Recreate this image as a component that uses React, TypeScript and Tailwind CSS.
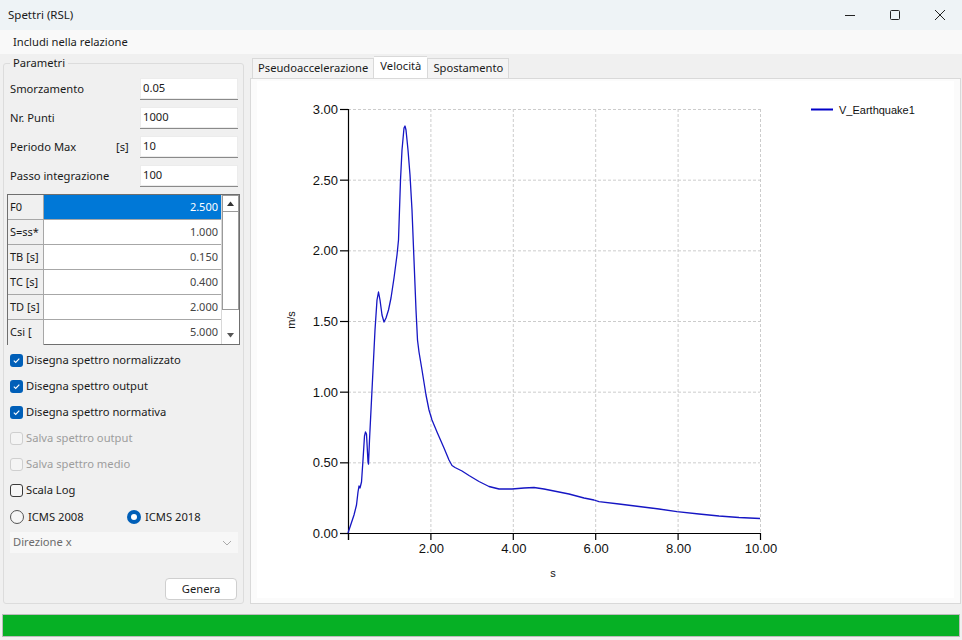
import type { ReactNode } from 'react'

const ui = { fontFamily: '"Segoe UI", "Noto Sans", sans-serif' }
const chartFont = '"Liberation Sans", Arial, sans-serif'

const params = [
  { label: 'Smorzamento', unit: '', value: '0.05' },
  { label: 'Nr. Punti', unit: '', value: '1000' },
  { label: 'Periodo Max', unit: '[s]', value: '10' },
  { label: 'Passo integrazione', unit: '', value: '100' },
]

const rows = [
  { k: 'F0', v: '2.500' },
  { k: 'S=ss*', v: '1.000' },
  { k: 'TB [s]', v: '0.150' },
  { k: 'TC [s]', v: '0.400' },
  { k: 'TD [s]', v: '2.000' },
  { k: 'Csi [', v: '5.000' },
]

const checks = [
  { label: 'Disegna spettro normalizzato', state: 'on' },
  { label: 'Disegna spettro output', state: 'on' },
  { label: 'Disegna spettro normativa', state: 'on' },
  { label: 'Salva spettro output', state: 'disabled' },
  { label: 'Salva spettro medio', state: 'disabled' },
  { label: 'Scala Log', state: 'off' },
]

// chart geometry in page pixels
const X0 = 349
const X1 = 761
const Y0 = 533
const Y1 = 109
const xs = [0, 2, 4, 6, 8, 10].map((v) => ({ v, px: X0 + ((X1 - X0) * v) / 10 }))
const ys = [0, 0.5, 1, 1.5, 2, 2.5, 3].map((v) => ({ v, px: Y0 - ((Y0 - Y1) * v) / 3 }))

const curve: [number, number][] = [
  [349, 533], [352, 524], [355, 515], [357.5, 505], [359, 492], [360, 486], [361, 488],
  [362.5, 482], [364, 460], [365.5, 436], [366.5, 432], [367.5, 434], [369, 462], [369.5, 464],
  [370.5, 440], [372, 410], [374, 370], [376, 330], [378, 300], [379.5, 292], [381, 300],
  [383, 315], [385, 322], [387, 318], [389.5, 310], [392, 298], [395, 278], [398, 255],
  [399.5, 240], [400.5, 210], [401.5, 180], [403, 150], [405, 128], [406, 126], [407, 130],
  [409, 150], [411, 175], [413, 210], [415, 260], [417, 310], [418.5, 340], [420, 352],
  [423, 370], [427, 395], [430, 410], [433, 420], [438, 432], [445, 448], [450, 460],
  [453, 465.5], [456, 467.5], [463, 471], [470, 475.5], [480, 481.5], [490, 486.5], [500, 489],
  [513, 489], [525, 488], [535, 487.5], [545, 489], [555, 491], [570, 494], [585, 498],
  [595, 500], [600, 501.7], [620, 504], [640, 506.5], [660, 509], [678, 511.7], [700, 514],
  [720, 516], [740, 517.5], [761, 518.5],
]

function Check({ state }: { state: string }) {
  if (state === 'on')
    return (
      <span className="flex h-[13px] w-[13px] items-center justify-center rounded-[3px] bg-[#005fb8]">
        <svg width="9" height="9" viewBox="0 0 9 9">
          <path d="M1.8 4.6 L3.7 6.4 L7.3 2.6" fill="none" stroke="white" strokeWidth="1.1" />
        </svg>
      </span>
    )
  return (
    <span
      className={
        state === 'disabled'
          ? 'h-[13px] w-[13px] rounded-[3px] border border-[#cfcfcf] bg-[#f4f4f4]'
          : 'h-[13px] w-[13px] rounded-[3px] border border-[#3a3a3a] bg-[#f6f6f6]'
      }
    />
  )
}

function Radio({ on, children }: { on?: boolean; children: ReactNode }) {
  return (
    <div className="flex items-center gap-[4px]">
      {on ? (
        <span className="flex h-[14px] w-[14px] items-center justify-center rounded-full bg-[#005fb8]">
          <span className="h-[6px] w-[6px] rounded-full bg-white" />
        </span>
      ) : (
        <span className="h-[14px] w-[14px] rounded-full border border-[#555] bg-[#f6f6f6]" />
      )}
      <span>{children}</span>
    </div>
  )
}

function Chart() {
  const d = curve.map(([x, y], i) => `${i ? 'L' : 'M'}${x} ${y}`).join(' ')
  return (
    <svg width="697" height="517" viewBox="258 81 697 517" className="block">
      <g stroke="#cccccc" strokeDasharray="3 2" strokeWidth="1">
        {ys.slice(1).map((t) => (
          <line key={t.v} x1={X0} x2={X1} y1={t.px + 0.5} y2={t.px + 0.5} />
        ))}
        {xs.slice(1).map((t) => (
          <line key={t.v} x1={t.px + 0.5} x2={t.px + 0.5} y1={Y1} y2={Y0} />
        ))}
      </g>
      <g stroke="#000" strokeWidth="1.2">
        <line x1={X0 + 0.5} x2={X0 + 0.5} y1={Y1} y2={Y0 + 7} />
        <line x1={X0} x2={X1 + 0.5} y1={Y0 + 0.5} y2={Y0 + 0.5} />
        {ys.map((t) => (
          <line key={t.v} x1={X0 - 8} x2={X0} y1={t.px + 0.5} y2={t.px + 0.5} />
        ))}
        {xs.map((t) => (
          <line key={t.v} x1={t.px + 0.5} x2={t.px + 0.5} y1={Y0} y2={Y0 + 7} />
        ))}
      </g>
      <g fontFamily={chartFont} fontSize="13" fill="#111">
        {ys.map((t) => (
          <text key={t.v} x={X0 - 10} y={t.px + 5} textAnchor="end">
            {t.v.toFixed(2)}
          </text>
        ))}
        {xs.slice(1).map((t) => (
          <text key={t.v} x={t.px + 1} y={Y0 + 20} textAnchor="middle">
            {t.v.toFixed(2)}
          </text>
        ))}
        <text x="554" y="577" textAnchor="middle" fontSize="11">
          s
        </text>
        <text x="0" y="0" fontSize="11" textAnchor="middle" transform="translate(296 320) rotate(-90)">
          m/s
        </text>
        <text x="840" y="113.5" fontSize="11">
          V_Earthquake1
        </text>
      </g>
      <line x1="812" x2="834" y1="109.5" y2="109.5" stroke="#0000c8" strokeWidth="2" />
      <path d={d} fill="none" stroke="#1616c4" strokeWidth="1.3" strokeLinejoin="round" />
    </svg>
  )
}

export default function App() {
  return (
    <div className="flex h-[640px] w-[962px] flex-col overflow-hidden bg-[#f0f0f0] text-[11.2px] text-[#1a1a1a]" style={ui}>
      {/* title bar */}
      <div className="flex h-[30px] shrink-0 items-center bg-[#eef3f6] pl-[8px]">
        <span className="flex-1 text-[11.5px]">Spettri (RSL)</span>
        <div className="flex h-full">
          <div className="flex w-[45px] items-center justify-center">
            <svg width="12" height="12" viewBox="0 0 12 12">
              <line x1="1" x2="11" y1="6.5" y2="6.5" stroke="#222" strokeWidth="1" />
            </svg>
          </div>
          <div className="flex w-[45px] items-center justify-center">
            <svg width="12" height="12" viewBox="0 0 12 12">
              <rect x="1.5" y="1.5" width="9" height="9" rx="1" fill="none" stroke="#222" strokeWidth="1" />
            </svg>
          </div>
          <div className="flex w-[45px] items-center justify-center">
            <svg width="12" height="12" viewBox="0 0 12 12">
              <path d="M1 1 L11 11 M11 1 L1 11" stroke="#222" strokeWidth="1" />
            </svg>
          </div>
        </div>
      </div>

      {/* menu */}
      <div className="flex h-[24px] shrink-0 items-center bg-[#f9f9f9] pl-[13px]">Includi nella relazione</div>

      <div className="flex min-h-0 flex-1 gap-[6px] pr-[4px] pl-[3px]">
        {/* left group */}
        <fieldset className="mt-[1px] mb-[3px] w-[243px] rounded-[3px] border border-[#dcdcdc] px-[3px] pb-[3px]">
          <legend className="ml-[3px] px-[3px] leading-[16px]">Parametri</legend>
          <div className="mt-[7px] grid gap-[7px]">
            {params.map((p) => (
              <div key={p.label} className="flex h-[22px] items-center pl-[3px] whitespace-nowrap">
                <span className="w-[106px]">{p.label}</span>
                <span className="w-[24px]">{p.unit}</span>
                <div className="flex h-[22px] w-[98px] items-center border-b border-[#8a8a8a] bg-white pl-[3px] shadow-[inset_0_0_0_1px_#ececec]">
                  {p.value}
                </div>
              </div>
            ))}
          </div>

          <div className="mt-[7px] flex h-[151px] w-[233px] border border-[#6f6f6f] bg-white text-[11px]">
            <div className="flex-1">
              {rows.map((r, i) => (
                <div key={r.k} className="flex h-[25px] border-b border-[#a7a7a7] last:border-b-0">
                  <div className="flex w-[36px] items-center border-r border-[#a7a7a7] bg-[#f0f0f0] pl-[2px]">{r.k}</div>
                  <div
                    className={
                      i === 0
                        ? 'flex flex-1 items-center justify-end bg-[#0078d7] pr-[3px] text-white'
                        : 'flex flex-1 items-center justify-end pr-[3px] text-[#444]'
                    }
                  >
                    {r.v}
                  </div>
                </div>
              ))}
            </div>
            <div className="flex w-[18px] flex-col border-l border-[#d8d8d8] bg-white">
              <div className="flex h-[17px] items-center justify-center border border-[#9a9a9a]">
                <svg width="7" height="5" viewBox="0 0 7 5">
                  <path d="M0 5 L3.5 0.5 L7 5 Z" fill="#333" />
                </svg>
              </div>
              <div className="h-[98px] border-x border-b border-[#9a9a9a] bg-white" />
              <div className="flex-1" />
              <div className="flex h-[17px] items-center justify-center">
                <svg width="7" height="5" viewBox="0 0 7 5">
                  <path d="M0 0 L7 0 L3.5 4.5 Z" fill="#555" />
                </svg>
              </div>
            </div>
          </div>

          <div className="mt-[2px] flex flex-col pl-[3px]">
            {checks.map((c) => (
              <div key={c.label} className="flex h-[26px] items-center gap-[3px]">
                <Check state={c.state} />
                <span className={c.state === 'disabled' ? 'text-[#9d9d9d]' : ''}>{c.label}</span>
              </div>
            ))}
            <div className="flex h-[28px] items-center">
              <div className="w-[117px]">
                <Radio>ICMS 2008</Radio>
              </div>
              <Radio on>ICMS 2018</Radio>
            </div>
            <div className="mt-[1px] flex h-[21px] w-[228px] items-center justify-between bg-[#f7f7f7] pr-[6px] pl-[3px] text-[#6b6b6b]">
              <span>Direzione x</span>
              <svg width="10" height="6" viewBox="0 0 10 6">
                <path d="M1 1 L5 5 L9 1" fill="none" stroke="#aaa" strokeWidth="1" />
              </svg>
            </div>
            <div className="mt-[25px] flex justify-end pr-[3px]">
              <button className="flex h-[22px] w-[72px] items-center justify-center rounded-[4px] border border-[#cfcfcf] bg-white">
                Genera
              </button>
            </div>
          </div>
        </fieldset>

        {/* tabs */}
        <div className="mt-[2px] mb-[3px] flex flex-1 flex-col">
          <div className="flex h-[22px] shrink-0 items-end pl-[2px]">
            <div className="flex h-[20px] items-center border border-b-0 border-[#d9d9d9] bg-[#f4f4f4] px-[5px]">Pseudoaccelerazione</div>
            <div className="flex h-[22px] items-center border-t border-[#d9d9d9] bg-white px-[6px] pb-[3px]">Velocità</div>
            <div className="flex h-[20px] items-center border border-b-0 border-[#d9d9d9] bg-[#f4f4f4] px-[5px]">Spostamento</div>
          </div>
          <div className="min-h-0 flex-1 overflow-hidden border border-[#d9d9d9] bg-[#fbfbfb] px-[6px] pt-[2px]">
            <div className="bg-white">
              <Chart />
            </div>
          </div>
        </div>
      </div>

      {/* progress */}
      <div className="mx-[2px] mt-[7px] mb-[3px] h-[23px] shrink-0 border border-[#bcbcbc] bg-[#06b025]" />
    </div>
  )
}
